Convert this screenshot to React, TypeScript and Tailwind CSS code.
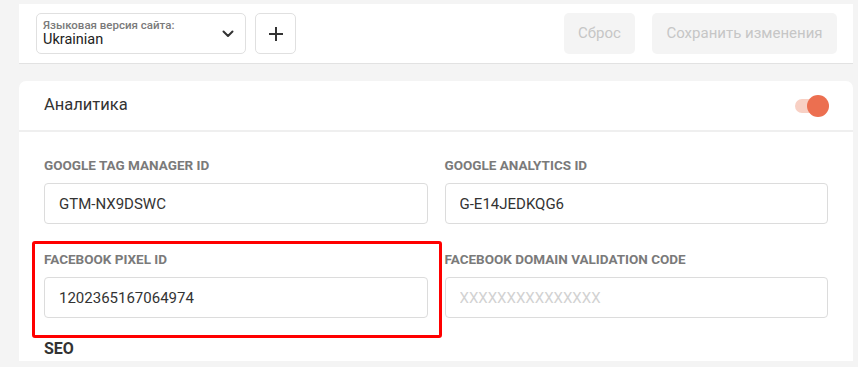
import { useState } from "react";

const Field = ({
  label,
  value,
  placeholder,
}: {
  label: string;
  value?: string;
  placeholder?: string;
}) => {
  return (
    <div className="flex flex-col">
      <label className="text-[13.5px] leading-4 font-bold uppercase text-[#7a7a7a]">{label}</label>
      <input
        defaultValue={value}
        placeholder={placeholder}
        className="mt-[10px] h-[41px] w-full rounded-[4px] border border-[#dcdcdc] bg-white pl-[14px] text-[15px] text-[#333] outline-none placeholder:text-[#d2d2d2]"
      />
    </div>
  );
};

const App = () => {
  const [on, setOn] = useState(true);
  return (
    <div
      className="h-[367px] w-full overflow-hidden bg-[#f4f4f4] pl-[19px] pr-[5px] pt-[4px]"
      style={{ fontFamily: "Roboto, 'Liberation Sans', sans-serif" }}
    >
      {/* top bar */}
      <div className="flex h-[60px] items-center border-b border-[#e2e2e2] bg-white pl-[17px] pr-[16px]">
        <button className="flex h-[41px] w-[210px] items-center justify-between rounded-[5px] border border-[#e0e0e0] pl-[6px] pr-[11px] text-left">
          <div className="flex flex-col">
            <span className="text-[11.5px] leading-[12px] font-medium text-[#7a7a7a]">Языковая версия сайта:</span>
            <span className="text-[14.5px] leading-[17px] text-[#222]">Ukrainian</span>
          </div>
          <svg width="12" height="8" viewBox="0 0 12 8" fill="none">
            <path d="M1.5 1.5L6 6L10.5 1.5" stroke="#333" strokeWidth="2" strokeLinecap="round" strokeLinejoin="round" />
          </svg>
        </button>
        <button className="ml-[9px] flex h-[41px] w-[41px] items-center justify-center rounded-[5px] border border-[#e0e0e0]">
          <svg width="16" height="16" viewBox="0 0 16 16" fill="none">
            <path d="M8 1V15M1 8H15" stroke="#333" strokeWidth="2" />
          </svg>
        </button>
        <div className="ml-auto flex gap-[17px]">
          <button className="h-[41px] w-[71px] rounded-[5px] bg-[#f4f4f4] text-[15px] text-[#c6c6c6]">Сброс</button>
          <button className="h-[41px] w-[185px] rounded-[5px] bg-[#f4f4f4] text-[15px] text-[#c6c6c6]">Сохранить изменения</button>
        </div>
      </div>

      {/* card */}
      <div className="mt-[17px] rounded-t-[7px] bg-white">
        <div className="flex h-[51px] items-center justify-between border-b-2 border-[#efefef] pl-[25px] pr-[24px]">
          <span className="text-[16.5px] text-[#333]">Аналитика</span>
          <button onClick={() => setOn(!on)} className="relative h-[24px] w-[38px]">
            <span className="absolute left-[4px] top-[5px] h-[14px] w-[30px] rounded-full bg-[#f8d0c4]" />
            <span className="absolute right-0 top-[1px] h-[22px] w-[22px] rounded-full bg-[#ec6f50]" />
          </button>
        </div>
        <div className="pl-[25px] pr-[25px] pt-[25px]">
          <div className="grid grid-cols-2 gap-x-[17px] gap-y-[27px]">
            <Field label="Google Tag Manager ID" value="GTM-NX9DSWC" />
            <Field label="Google Analytics ID" value="G-E14JEDKQG6" />
            <div className="relative">
              <Field label="Facebook Pixel ID" value="1202365167064974" />
              <div className="pointer-events-none absolute -bottom-[20px] -left-[12px] -right-[14px] -top-[10px] rounded-[3px] border-[3px] border-[#f00]" />
            </div>
            <Field label="Facebook Domain Validation Code" placeholder="XXXXXXXXXXXXXXX" />
          </div>
          <div className="mt-[19px] text-[16px] font-bold text-[#333]">SEO</div>
        </div>
      </div>
    </div>
  );
};

export default App;
